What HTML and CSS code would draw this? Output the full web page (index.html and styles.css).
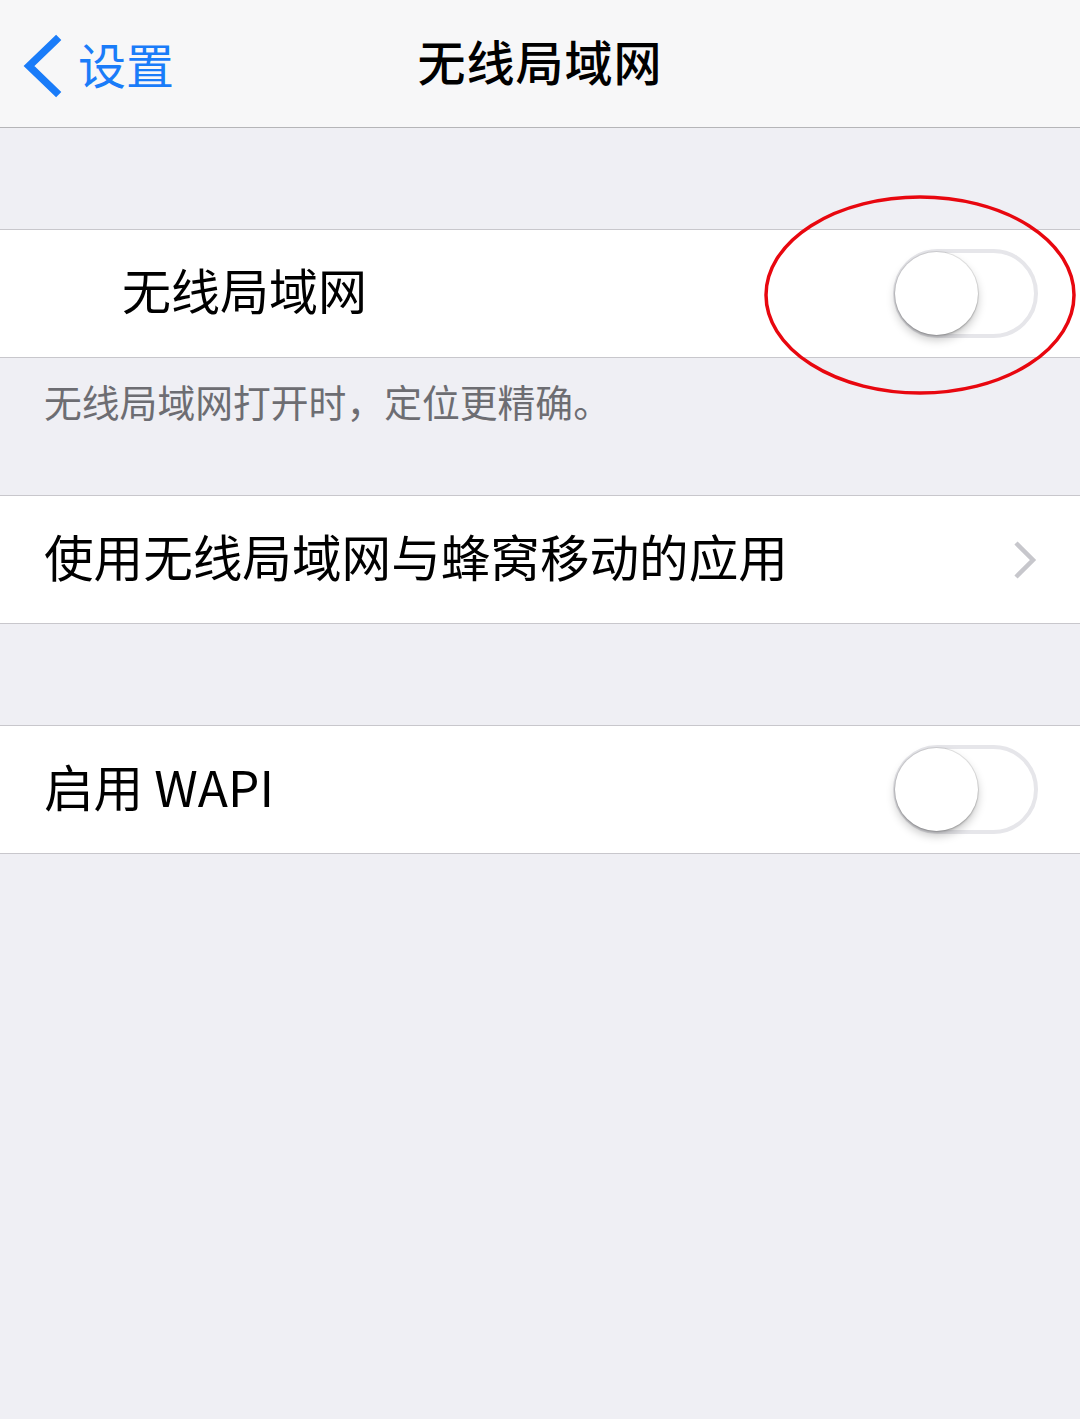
FILE: index.html
```html
<!DOCTYPE html>
<html lang="zh-CN">
<head>
<meta charset="utf-8">
<title>无线局域网</title>
<link rel="stylesheet" href="styles.css">
</head>
<body>
<header class="nav">
  <a class="back">
    <svg class="back-icon" width="44" height="64" viewBox="0 0 44 64"><polyline points="36,6 9,32 36,58" fill="none" stroke="#1a7cf9" stroke-width="7.5" stroke-linecap="square" stroke-linejoin="miter"/></svg>
    <span class="back-text">设置</span>
  </a>
  <h1 class="title">无线局域网</h1>
</header>

<main>
  <section class="group first">
    <div class="row">
      <span class="label indented">无线局域网</span>
      <span class="switch"><span class="knob"></span></span>
    </div>
  </section>
  <p class="footer">无线局域网打开时，定位更精确。</p>

  <section class="group">
    <div class="row">
      <span class="label">使用无线局域网与蜂窝移动的应用</span>
      <svg class="chevron" width="26" height="40" viewBox="0 0 26 40"><polyline points="4,3 21,20 4,37" fill="none" stroke="#c7c7cc" stroke-width="4.5"/></svg>
    </div>
  </section>

  <section class="group third">
    <div class="row">
      <span class="label">启用 WAPI</span>
      <span class="switch"><span class="knob"></span></span>
    </div>
  </section>
</main>

<svg class="annotation" width="320" height="210" viewBox="0 0 320 210"><ellipse cx="157" cy="101" rx="154" ry="98" fill="none" stroke="#e8070f" stroke-width="3.5"/></svg>
</body>
</html>
```

FILE: styles.css
```css
html, body {
  margin: 0;
  padding: 0;
}
body {
  width: 1080px;
  min-height: 1419px;
  background: #efeff4;
  font-family: "Inter", "Noto Sans CJK SC", sans-serif;
  position: relative;
  color: #000;
}
.nav {
  height: 127px;
  background: #f7f7f8;
  border-bottom: 1px solid #b5b5b8;
  position: relative;
  display: flex;
  align-items: center;
  justify-content: center;
}
.back {
  position: absolute;
  left: 20px;
  top: 31px;
  display: flex;
  align-items: center;
  color: #1a7cf9;
}
.back-icon {
  display: block;
}
.back-text {
  font-size: 48px;
  margin-left: 14px;
  line-height: 64px;
  padding-bottom: 6px;
  font-family: "Noto Sans CJK SC", sans-serif;
}
.title {
  margin: 0;
  font-size: 48px;
  font-weight: 500;
  font-family: "Noto Sans CJK SC", sans-serif;
  line-height: 64px;
  letter-spacing: 1px;
  padding-bottom: 8px;
}
main {
  display: flex;
  flex-direction: column;
}
.group {
  background: #fff;
  border-top: 1px solid #c8c7cc;
  border-bottom: 1px solid #c8c7cc;
  margin-top: 100px;
}
.group.first {
  margin-top: 101px;
}
.group.third {
  margin-top: 101px;
}
.row {
  height: 127px;
  display: flex;
  align-items: center;
  padding: 0 42px 0 44px;
}
.label {
  flex: 1;
  font-size: 49.6px;
  line-height: 64px;
  padding-bottom: 9px;
  font-family: "Noto Sans CJK SC", sans-serif;
}
.label.indented {
  padding-left: 78px;
  font-size: 49px;
}
.switch {
  width: 145px;
  height: 89px;
  box-sizing: border-box;
  border: 4px solid #e6e6ea;
  border-radius: 45px;
  background: #fff;
  position: relative;
  flex: none;
}
.knob {
  position: absolute;
  left: -2px;
  top: -1px;
  width: 83px;
  height: 83px;
  border-radius: 50%;
  background: #fff;
  box-shadow: 0 0 0 1px rgba(0, 0, 0, 0.1), 0 5px 10px rgba(0, 0, 0, 0.22), 0 2px 2px rgba(0, 0, 0, 0.12);
}
.chevron {
  display: block;
}
.footer {
  margin: 0;
  padding: 18px 44px 0;
  height: 119px;
  font-size: 37.8px;
  line-height: 50px;
  color: #6d6d72;
  font-family: "Noto Sans CJK SC", sans-serif;
}
.footer + .group {
  margin-top: 0;
}
.annotation {
  position: absolute;
  left: 763px;
  top: 194px;
}
```
